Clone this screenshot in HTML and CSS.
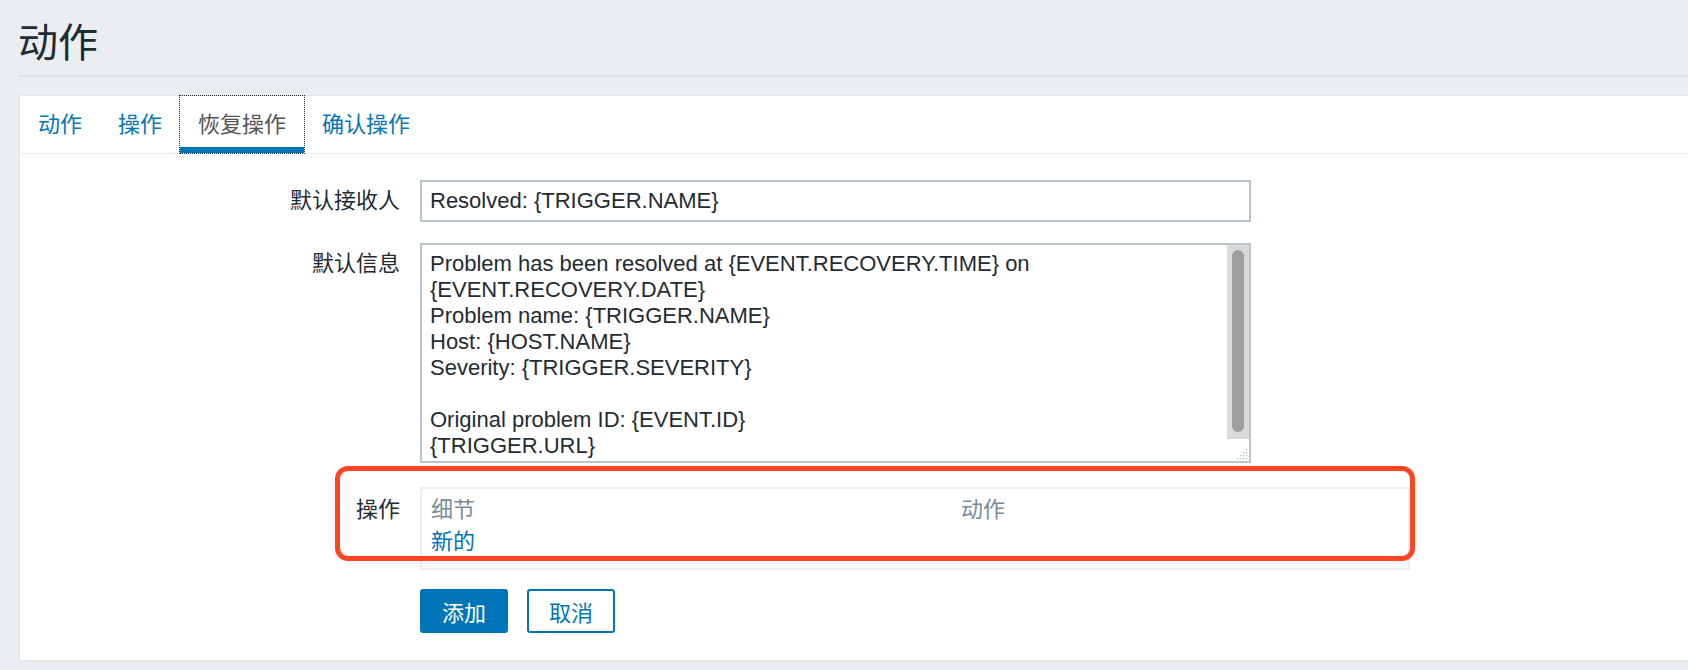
FILE: index.html
```html
<!DOCTYPE html>
<html lang="zh-CN">
<head>
<meta charset="utf-8">
<title>动作</title>
<link rel="stylesheet" href="styles.css">
</head>
<body>
<header class="page-header">
  <h1 class="page-title">动作</h1>
</header>
<main class="wrapper">
  <section class="panel">
    <ul class="tabs">
      <li><a class="tab" href="#">动作</a></li>
      <li><a class="tab" href="#">操作</a></li>
      <li><a class="tab tab-active" href="#">恢复操作</a></li>
      <li><a class="tab" href="#">确认操作</a></li>
    </ul>
    <form class="form">
      <div class="row row-subject">
        <label class="lbl lbl-input">默认接收人</label>
        <input class="text-input" type="text" value="Resolved: {TRIGGER.NAME}">
      </div>
      <div class="row row-message">
        <label class="lbl lbl-area">默认信息</label>
        <div class="area-wrap">
          <textarea class="text-area">Problem has been resolved at {EVENT.RECOVERY.TIME} on {EVENT.RECOVERY.DATE}
Problem name: {TRIGGER.NAME}
Host: {HOST.NAME}
Severity: {TRIGGER.SEVERITY}

Original problem ID: {EVENT.ID}
{TRIGGER.URL}
</textarea>
          <div class="scroll-track"><div class="scroll-thumb"></div></div>
          <svg class="grip" width="14" height="14" viewBox="0 0 14 14" aria-hidden="true">
            <g fill="#a9b4b9">
              <rect x="12" y="3" width="1.2" height="1.2"/>
              <rect x="9" y="6" width="1.2" height="1.2"/>
              <rect x="12" y="6" width="1.2" height="1.2"/>
              <rect x="6" y="9" width="1.2" height="1.2"/>
              <rect x="9" y="9" width="1.2" height="1.2"/>
              <rect x="12" y="9" width="1.2" height="1.2"/>
              <rect x="3" y="12" width="1.2" height="1.2"/>
              <rect x="6" y="12" width="1.2" height="1.2"/>
              <rect x="9" y="12" width="1.2" height="1.2"/>
              <rect x="12" y="12" width="1.2" height="1.2"/>
            </g>
          </svg>
        </div>
      </div>
      <div class="row row-ops">
        <label class="lbl lbl-ops">操作</label>
        <div class="ops-table">
          <div class="ops-head">细节</div>
          <div class="ops-head">动作</div>
          <div class="ops-cell"><a class="link" href="#">新的</a></div>
          <div class="ops-cell"></div>
        </div>
        <div class="highlight"></div>
      </div>
      <div class="row row-buttons">
        <span></span>
        <div class="buttons">
          <button type="button" class="btn btn-primary">添加</button>
          <button type="button" class="btn btn-alt">取消</button>
        </div>
      </div>
    </form>
  </section>
</main>
</body>
</html>
```

FILE: styles.css
```css
html, body {
  margin: 0;
  padding: 0;
}

body {
  background: #ebeef0;
  color: #1f2c33;
  font-family: "Liberation Sans", "Noto Sans CJK SC", sans-serif;
  font-size: 22px;
  overflow: hidden;
}

.page-header {
  margin-left: 18px;
  padding-top: 23px;
  padding-bottom: 12px;
  border-bottom: 2px solid #dde2e5;
}

.page-title {
  margin: 0;
  font-size: 40px;
  font-weight: normal;
  line-height: 40px;
  color: #1f2c33;
}

.wrapper {
  padding: 18px 0 0 19px;
}

.panel {
  background: #ffffff;
  border: 1px solid #dfe4e7;
  border-right: none;
  padding-bottom: 27px;
  position: relative;
}

.tabs {
  list-style: none;
  margin: 0;
  padding: 0;
  display: flex;
  border-bottom: 1px solid #ebeef0;
}

.tab {
  display: block;
  height: 57px;
  line-height: 57px;
  padding: 0 18px;
  color: #0275b8;
  text-decoration: none;
}

.tab-active {
  color: #555555;
  outline: 1px dotted #1f2c33;
  box-shadow: inset 0 -6px 0 #0275b8;
}

.form {
  padding-top: 26px;
}

.row {
  display: grid;
  grid-template-columns: 380px 1fr;
  column-gap: 20px;
  align-items: start;
}

.row-message { margin-top: 21px; }
.row-ops { margin-top: 24px; position: relative; }
.row-buttons { margin-top: 19px; }

.lbl {
  text-align: right;
  color: #1f2c33;
}

.lbl-input {
  line-height: 42px;
}

.lbl-area {
  padding-top: 8px;
  line-height: 25px;
}

.lbl-ops {
  padding-top: 10px;
  line-height: 25px;
}

.text-input {
  box-sizing: border-box;
  width: 831px;
  height: 42px;
  margin: 0;
  border: 2px solid #b9c5cb;
  padding: 0 8px;
  font: inherit;
  font-family: "Liberation Sans", sans-serif;
  color: #1f2c33;
  background: #fff;
  outline: none;
}

.area-wrap {
  position: relative;
  width: 831px;
  height: 220px;
}

.text-area {
  box-sizing: border-box;
  display: block;
  width: 831px;
  height: 220px;
  margin: 0;
  border: 2px solid #b9c5cb;
  padding: 6px 30px 6px 8px;
  font: inherit;
  font-family: "Liberation Sans", sans-serif;
  line-height: normal;
  color: #1f2c33;
  background: #fff;
  resize: none;
  outline: none;
  overflow: hidden;
}

.scroll-track {
  position: absolute;
  top: 2px;
  right: 2px;
  width: 22px;
  height: 194px;
  background: #d9d9d9;
  box-sizing: border-box;
  padding: 5px;
}

.scroll-thumb {
  width: 12px;
  height: 182px;
  background: #9e9e9e;
  border-radius: 6px;
}

.grip {
  position: absolute;
  right: 3px;
  bottom: 3px;
}

.ops-table {
  box-sizing: border-box;
  width: 990px;
  height: 83px;
  border: 2px solid #ebeef0;
  display: grid;
  grid-template-columns: 530px 1fr;
  grid-template-rows: 37px 32px;
  align-content: start;
}

.ops-head {
  padding: 5px 9px 0;
  line-height: 32px;
  color: #768d99;
}

.ops-cell {
  padding: 0 9px;
  line-height: 32px;
}

.link {
  color: #0275b8;
  text-decoration: none;
}

.highlight {
  position: absolute;
  left: 315px;
  top: -21px;
  width: 1080px;
  height: 95px;
  box-sizing: border-box;
  border: 5px solid #fd4521;
  border-radius: 13px;
  pointer-events: none;
}

.buttons {
  display: flex;
  gap: 19px;
}

.btn {
  box-sizing: border-box;
  height: 44px;
  width: 88px;
  padding: 0;
  margin: 0;
  font: inherit;
  border-radius: 3px;
  border: 2px solid #0275b8;
  cursor: pointer;
}

.btn-primary {
  background: #0275b8;
  color: #ffffff;
}

.btn-alt {
  background: #ffffff;
  color: #0275b8;
}
```
